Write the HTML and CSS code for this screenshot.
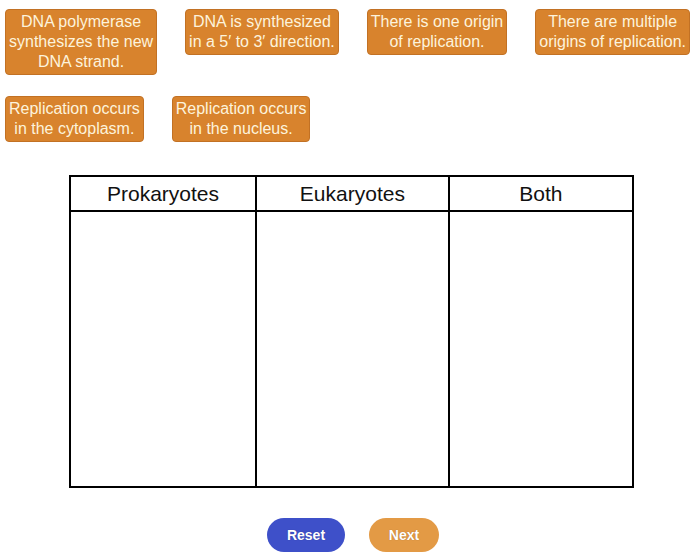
FILE: index.html
```html
<!DOCTYPE html>
<html lang="en">
<head>
    <meta charset="UTF-8">
    <title>Replication sort</title>
    <link rel="stylesheet" href="styles.css">
</head>
<body>
    <div class="bank">
        <div class="bank-row">
            <div class="chip">DNA polymerase<br>synthesizes the new<br>DNA strand.</div>
            <div class="chip">DNA is synthesized<br>in a 5&prime; to 3&prime; direction.</div>
            <div class="chip">There is one origin<br>of replication.</div>
            <div class="chip">There are multiple<br>origins of replication.</div>
        </div>
        <div class="bank-row">
            <div class="chip">Replication occurs<br>in the cytoplasm.</div>
            <div class="chip">Replication occurs<br>in the nucleus.</div>
        </div>
    </div>

    <table class="sort-table">
        <thead>
            <tr>
                <th class="col-a">Prokaryotes</th>
                <th class="col-b">Eukaryotes</th>
                <th class="col-c">Both</th>
            </tr>
        </thead>
        <tbody>
            <tr>
                <td></td>
                <td></td>
                <td></td>
            </tr>
        </tbody>
    </table>

    <div class="actions">
        <button class="btn btn-reset">Reset</button>
        <button class="btn btn-next">Next</button>
    </div>
</body>
</html>
```

FILE: styles.css
```css
body {
    margin: 0;
    background: #fff;
    font-family: Arial, "Liberation Sans", sans-serif;
    width: 694px;
    height: 557px;
    overflow: hidden;
}

.bank {
    padding: 9px 0 0 5px;
    display: flex;
    flex-direction: column;
    gap: 21px;
}

.bank-row {
    display: flex;
    align-items: flex-start;
    gap: 28px;
}

.chip {
    background: #d8832d;
    border: 1px solid #c27124;
    border-radius: 4px;
    color: #fdf3dc;
    font-size: 16px;
    line-height: 20px;
    text-align: center;
    padding: 2px 3px;
    white-space: nowrap;
}

.sort-table {
    margin: 33px 0 0 69px;
    width: 565px;
    height: 313px;
    border-collapse: collapse;
    border: 2px solid #000;
}

.sort-table th,
.sort-table td {
    border: 2px solid #000;
    padding: 0;
}

.sort-table th {
    height: 33px;
    font-size: 21px;
    font-weight: normal;
    color: #111;
    text-align: center;
    vertical-align: middle;
}

.col-a { width: 186px; }
.col-b { width: 193px; }
.col-c { width: 186px; }

.actions {
    display: flex;
    justify-content: center;
    gap: 24px;
    margin-top: 30px;
    padding-left: 12px;
}

.btn {
    height: 34px;
    border: none;
    border-radius: 17px;
    color: #fff;
    font-family: Arial, "Liberation Sans", sans-serif;
    font-size: 14px;
    font-weight: bold;
    cursor: pointer;
    text-shadow: 0 0 1px rgba(0, 0, 0, 0.3);
}

.btn-reset {
    width: 78px;
    background: #3e50c9;
}

.btn-next {
    width: 70px;
    background: #e39a45;
}
```
